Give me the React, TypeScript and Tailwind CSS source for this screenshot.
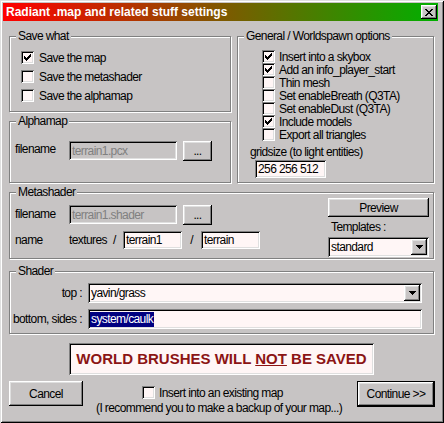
import React from "react";

const raised =
  "shadow-[inset_-1px_-1px_0_#000,inset_1px_1px_0_#fff,inset_-2px_-2px_0_#808080,inset_2px_2px_0_#dfdfdf]";
const sunken =
  "shadow-[inset_1px_1px_0_#808080,inset_-1px_-1px_0_#fff,inset_2px_2px_0_#000,inset_-2px_-2px_0_#dfdfdf]";

function Check({ on }: { on?: boolean }) {
  return (
    <span
      className={`flex w-[13px] h-[13px] shrink-0 items-center justify-center bg-[#fff6f6] ${sunken}`}
    >
      {on && (
        <svg width="7" height="7" viewBox="0 0 7 7" shapeRendering="crispEdges">
          <path
            d="M6 0h1v3h-1zM5 1h1v3h-1zM4 2h1v3h-1zM0 2h1v3h-1zM1 3h1v3h-1zM2 4h1v3h-1zM3 3h1v3h-1z"
            fill="#000"
          />
        </svg>
      )}
    </span>
  );
}

function Group({ label, className, children }: any) {
  return (
    <div
      className={`flex flex-col border border-[#808080] shadow-[1px_1px_0_#fff,inset_1px_1px_0_#fff] ${className}`}
    >
      <span className="-mt-[8px] ml-[6px] px-[2px] w-fit leading-[14px] bg-[#c7c4c4]">{label}</span>
      {children}
    </div>
  );
}

function Field({ value, className, disabled }: any) {
  return (
    <div
      className={`flex items-center pl-[3px] whitespace-nowrap ${sunken} ${
        disabled ? "bg-[#c7c4c4] text-[#808080]" : "bg-[#fff6f6]"
      } ${className}`}
    >
      {value}
    </div>
  );
}

function Arrow() {
  return (
    <span className={`flex w-[16px] h-[16px] items-center justify-center bg-[#c7c4c4] ${raised}`}>
      <svg width="7" height="4" viewBox="0 0 7 4" shapeRendering="crispEdges">
        <path d="M0 0h7v1h-7zM1 1h5v1h-5zM2 2h3v1h-3zM3 3h1v1h-1z" fill="#000" />
      </svg>
    </span>
  );
}

function Combo({ value, className }: any) {
  return (
    <div className={`flex items-center pl-[3px] pr-[2px] bg-[#fff6f6] ${sunken} ${className}`}>
      <span className="flex-1">{value}</span>
      <Arrow />
    </div>
  );
}

function Button({ children, className }: any) {
  return (
    <div
      className={`flex items-center justify-center whitespace-nowrap bg-[#c7c4c4] ${raised} ${className}`}
    >
      {children}
    </div>
  );
}

export default function App() {
  const general = [
    ["Insert into a skybox", true],
    ["Add an info_player_start", true],
    ["Thin mesh", false],
    ["Set enableBreath (Q3TA)", false],
    ["Set enableDust (Q3TA)", false],
    ["Include models", true],
    ["Export all triangles", false],
  ] as const;

  return (
    <div className="w-[444px] h-[423px] flex flex-col p-[3px] bg-[#c7c4c4] text-[12px] tracking-[-0.6px] leading-[14px] text-black whitespace-nowrap font-['Liberation_Sans',Arial,sans-serif] shadow-[inset_1px_1px_0_#dfdfdf,inset_-1px_-1px_0_#000,inset_2px_2px_0_#fff,inset_-2px_-2px_0_#808080]">
      {/* Title bar */}
      <div className="w-[435px] h-[18px] flex items-center justify-between pl-[3px] bg-[linear-gradient(to_right,#ff0000,#00b000)]">
        <span className="font-bold text-[12px] tracking-normal text-white">
          Radiant .map and related stuff settings
        </span>
        <span className={`flex w-[16px] h-[14px] mr-[1px] items-center justify-center bg-[#c7c4c4] ${raised}`}>
          <svg width="8" height="7" viewBox="0 0 8 7" shapeRendering="crispEdges">
            <path
              d="M0 0h2v1h-2zM6 0h2v1h-2zM1 1h2v1h-2zM5 1h2v1h-2zM2 2h4v1h-4zM3 3h2v1h-2zM2 4h4v1h-4zM1 5h2v1h-2zM5 5h2v1h-2zM0 6h2v1h-2zM6 6h2v1h-2z"
              fill="#000"
            />
          </svg>
        </span>
      </div>

      <div className="pl-[6px] flex flex-col">
        {/* Top row */}
        <div className="flex gap-[6px] mt-[15px] items-start">
          <div className="w-[222px] flex flex-col">
            <Group label="Save what" className="h-[76px]">
              <div className="mt-[5px] pl-[11px] flex flex-col">
                {[
                  ["Save the map", true],
                  ["Save the metashader", false],
                  ["Save the alphamap", false],
                ].map(([t, on]) => (
                  <div key={t as string} className="h-[19px] flex items-center gap-[5px]">
                    <Check on={on as boolean} />
                    <span>{t}</span>
                  </div>
                ))}
              </div>
            </Group>
            <Group label="Alphamap" className="mt-[9px] h-[62px]">
              <div className="mt-[13px] pl-[5px] flex items-start">
                <span className="w-[54px] mt-[1px]">filename</span>
                <Field value="terrain1.pcx" disabled className="w-[108px] h-[19px]" />
                <Button className="ml-[6px] w-[29px] h-[20px]">...</Button>
              </div>
            </Group>
          </div>

          <Group label="General / Worldspawn options" className="w-[197px] h-[147px]">
            <div className="mt-[7px] pl-[24px] flex flex-col">
              {general.map(([t, on]) => (
                <div key={t} className="h-[13px] flex items-center gap-[4px]">
                  <Check on={on} />
                  <span>{t}</span>
                </div>
              ))}
            </div>
            <span className="mt-[4px] pl-[12px]">gridsize (to light entities)</span>
            <Field value="256 256 512" className="mt-[1px] ml-[17px] w-[71px] h-[18px]" />
          </Group>
        </div>

        {/* Metashader */}
        <div className="mt-[9px] w-[425px] h-[67px] flex border border-[#808080] shadow-[1px_1px_0_#fff,inset_1px_1px_0_#fff]">
          <div className="flex flex-col">
            <span className="-mt-[8px] ml-[6px] px-[2px] w-fit leading-[14px] bg-[#c7c4c4]">Metashader</span>
            <div className="mt-[6px] pl-[5px] flex items-start">
              <span className="w-[54px] mt-[2px]">filename</span>
              <Field value="terrain1.shader" disabled className="w-[108px] h-[19px]" />
              <Button className="ml-[6px] w-[29px] h-[20px]">...</Button>
            </div>
            <div className="mt-[6px] pl-[5px] flex items-center">
              <span className="w-[54px]">name</span>
              <span className="w-[44px]">textures</span>
              <span className="w-[10px]">/</span>
              <Field value="terrain1" className="w-[59px] h-[18px]" />
              <span className="w-[19px] text-center">/</span>
              <Field value="terrain" className="w-[59px] h-[18px]" />
            </div>
          </div>
          <div className="ml-auto mr-[4px] w-[101px] flex flex-col">
            <Button className="mt-[5px] h-[19px]">Preview</Button>
            <span className="mt-[3px] ml-[3px]">Templates :</span>
            <Combo value="standard" className="mt-[3px] h-[20px]" />
          </div>
        </div>

        {/* Shader */}
        <Group label="Shader" className="mt-[12px] w-[425px] h-[63px]">
          <div className="mt-[5px] flex items-center">
            <span className="w-[72px] text-right">top :</span>
            <Combo value="yavin/grass" className="ml-[6px] w-[334px] h-[20px]" />
          </div>
          <div className="mt-[6px] flex items-center">
            <span className="w-[72px] text-right">bottom, sides :</span>
            <div className={`ml-[6px] w-[334px] h-[20px] flex items-center pl-[2px] bg-[#fff6f6] ${sunken}`}>
              <span className="bg-[#000080] text-white leading-[15px] px-[1px]">system/caulk</span>
            </div>
          </div>
        </Group>

        {/* Warning */}
        <div
          className={`mt-[9px] ml-[60px] w-[305px] h-[32px] flex items-center justify-center bg-[#fff6f6] ${sunken} font-bold text-[15px] tracking-normal text-[#8b1414]`}
        >
          <span>
            WORLD BRUSHES WILL <span className="underline">NOT</span> BE SAVED
          </span>
        </div>

        {/* Bottom row */}
        <div className="mt-[6px] w-[426px] flex items-start">
          <Button className="w-[74px] h-[25px]">Cancel</Button>
          <div className="ml-[13px] flex flex-col">
            <div className="ml-[46px] mt-[5px] h-[13px] flex items-center gap-[4px]">
              <Check />
              <span>Insert into an existing map</span>
            </div>
            <span className="mt-[2px]">(I recommend you to make a backup of your map...)</span>
          </div>
          <div className="ml-auto w-[78px] h-[26px] border border-black">
            <Button className="w-full h-full">Continue &gt;&gt;</Button>
          </div>
        </div>
      </div>
    </div>
  );
}
